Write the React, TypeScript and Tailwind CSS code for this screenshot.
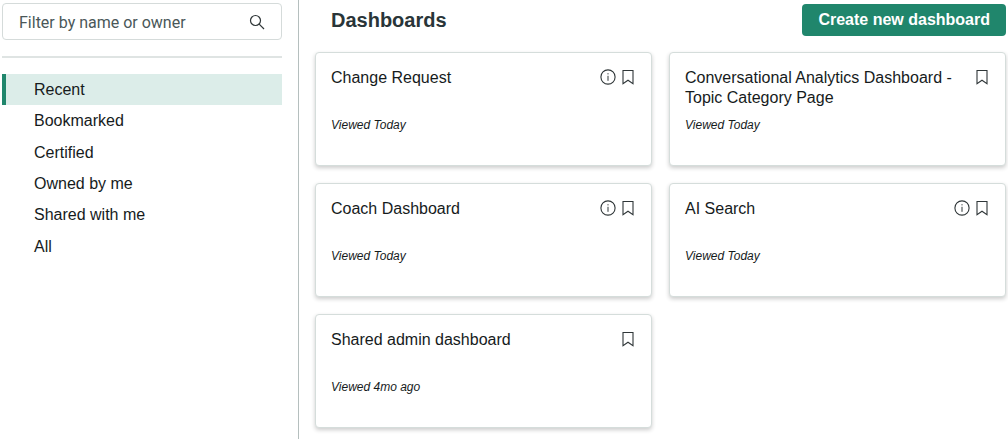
import { useState } from "react";

type Dashboard = {
    title: string;
    viewed: string;
    hasInfo: boolean;
};

const filters = ["Recent", "Bookmarked", "Certified", "Owned by me", "Shared with me", "All"];

const dashboards: Dashboard[] = [
    { title: "Change Request", viewed: "Viewed Today", hasInfo: true },
    { title: "Conversational Analytics Dashboard - Topic Category Page", viewed: "Viewed Today", hasInfo: false },
    { title: "Coach Dashboard", viewed: "Viewed Today", hasInfo: true },
    { title: "AI Search", viewed: "Viewed Today", hasInfo: true },
    { title: "Shared admin dashboard", viewed: "Viewed 4mo ago", hasInfo: false },
];

function SearchIcon() {
    return (
        <svg width="16" height="16" viewBox="0 0 16 16" fill="none" stroke="currentColor" strokeWidth="1.2" aria-hidden="true">
            <circle cx="6.5" cy="6.5" r="5" />
            <path d="M10.2 10.2L15 15" />
        </svg>
    );
}

function InfoIcon() {
    return (
        <svg width="16" height="16" viewBox="0 0 16 16" fill="none" stroke="currentColor" aria-hidden="true">
            <circle cx="8" cy="8" r="7.1" strokeWidth="1.1" />
            <path d="M8 6.8V11.8M8 4.2V5.4" />
        </svg>
    );
}

function BookmarkIcon() {
    return (
        <svg width="12" height="16" viewBox="0 0 12 16" fill="none" stroke="currentColor" strokeWidth="1.1" aria-hidden="true">
            <path d="M1 1.5H11V14.6L6 11.2L1 14.6Z" />
        </svg>
    );
}

function DashboardCard({ title, viewed, hasInfo }: Dashboard) {
    return (
        <article className="flex flex-col h-[114px] px-[15px] pt-[15px] bg-white border border-[#d5dddb] rounded shadow-[0_2px_4px_rgba(0,0,0,0.2)]">
            <div className="flex items-start justify-between h-12">
                <h2 className="text-base leading-5">
                    <a href="#">{title}</a>
                </h2>
                <div className="flex gap-1.5 pt-px pr-0.5 pl-4 text-[#2f3638]">
                    {hasInfo && (
                        <button type="button" aria-label={`About ${title}`}>
                            <InfoIcon />
                        </button>
                    )}
                    <button type="button" aria-label={`Bookmark ${title}`}>
                        <BookmarkIcon />
                    </button>
                </div>
            </div>
            <p className="text-xs leading-[18px] italic">{viewed}</p>
        </article>
    );
}

export default function App() {
    const [active, setActive] = useState("Recent");

    return (
        <div className="flex min-h-screen bg-white font-['Liberation_Sans',Arial,sans-serif] text-[#161b1c]">
            {/* SIDEBAR */}
            <aside className="w-[299px] shrink-0 pt-[3px] pr-4 pl-0.5 border-r border-[#b5bfbe]">
                <label className="flex items-center h-[37px] px-4 border border-[#d5dbda] rounded text-[#2f3638]">
                    <input
                        type="text"
                        aria-label="Filter by name or owner"
                        placeholder="Filter by name or owner"
                        className="flex-1 min-w-0 pt-0.5 font-['Roboto',sans-serif] text-base outline-none placeholder:text-[#4a5759]"
                    />
                    <SearchIcon />
                </label>
                <hr className="my-4 border-t-2 border-[#dfe4e3]" />
                <nav className="grid auto-rows-fr h-[188px]">
                    {filters.map((name) => (
                        <button
                            key={name}
                            type="button"
                            onClick={() => setActive(name)}
                            className={`pt-px pl-7 text-left text-base border-l-4 ${active === name
                                ? "bg-[#dcede9] border-[#20866c]"
                                : "border-transparent"
                                }`}
                        >
                            {name}
                        </button>
                    ))}
                </nav>
            </aside>

            {/* DASHBOARD LIST */}
            <main className="flex-1 min-w-0 pt-1 pr-0.5 pl-4">
                <header className="flex items-center justify-between pl-4">
                    <h1 className="text-xl font-bold text-[#293538]">Dashboards</h1>
                    <button type="button" className="h-8 px-4 text-base font-bold text-white rounded bg-[#20866c]">
                        Create new dashboard
                    </button>
                </header>
                <div className="grid grid-cols-2 gap-[17px] mt-4">
                    {dashboards.map((item) => (
                        <DashboardCard key={item.title} {...item} />
                    ))}
                </div>
            </main>
        </div>
    );
}
